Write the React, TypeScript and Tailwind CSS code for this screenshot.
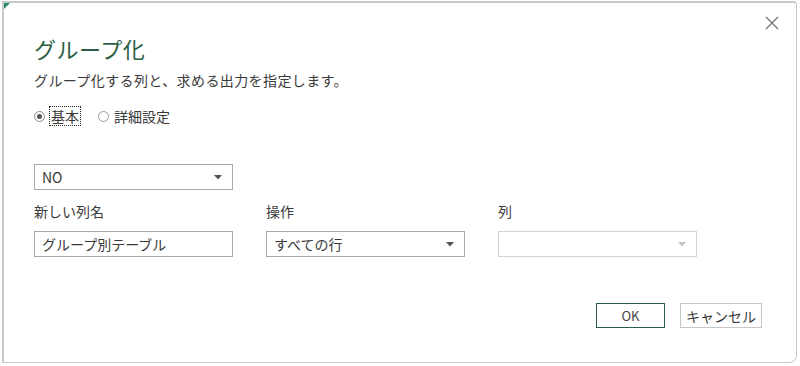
import React from "react";

const font = { fontFamily: '"Noto Sans CJK JP", "Noto Sans", sans-serif' };

const Caret: React.FC<{ dim?: boolean }> = ({ dim }) => (
  <svg width="8" height="5" viewBox="0 0 8 5" className="shrink-0">
    <path d="M0 0h8L4 4.5z" fill={dim ? "#c4c4c4" : "#555"} />
  </svg>
);

const Select: React.FC<{ value?: string; disabled?: boolean }> = ({ value, disabled }) => (
  <div
    className={`w-[199px] h-[26px] flex items-center justify-between pl-[7px] pr-[10px] border bg-white ${
      disabled ? "border-[#d4d4d4]" : "border-[#a9a9a9]"
    }`}
  >
    <span className="text-[14px] text-[#3a3a3a] leading-none">{value}</span>
    <Caret dim={disabled} />
  </div>
);

export default function App() {
  return (
    <div className="w-[800px] h-[366px] bg-white overflow-hidden" style={font}>
      <div className="relative ml-[2px] mt-[1px] w-[795px] h-[362px] border-t-2 border-l-2 border-r border-b border-[#c9c9c9] rounded-tr-[4px] rounded-br-[8px] bg-white">
        <div className="absolute left-0 top-0 w-0 h-0 border-t-[6px] border-r-[6px] border-t-[#2f8a6c] border-r-transparent" />
        <button className="absolute right-[14px] top-[10px] w-[20px] h-[20px] flex items-center justify-center">
          <svg width="14" height="14" viewBox="0 0 14 14">
            <path d="M1 1l12 12M13 1L1 13" stroke="#6e6e6e" strokeWidth="1.1" />
          </svg>
        </button>

        <div className="pl-[30px]">
          <h1 className="pt-[31px] text-[22px] leading-[28px] text-[#2c5e45] font-normal tracking-[0.5px]">
            グループ化
          </h1>
          <p className="mt-[8px] text-[14px] leading-[20px] text-[#3a3a3a] tracking-[0.4px]">
            グループ化する列と、求める出力を指定します。
          </p>

          <div className="mt-[15px] flex items-center text-[14px] text-[#3a3a3a] h-[22px]">
            <span className="w-[11px] h-[11px] rounded-full border border-[#8a8a8a] flex items-center justify-center">
              <span className="w-[5px] h-[5px] rounded-full bg-[#555]" />
            </span>
            <span className="ml-[4px] px-[1px] border border-dotted border-[#222] leading-[18px]">基本</span>
            <span className="ml-[17px] w-[11px] h-[11px] rounded-full border border-[#9a9a9a]" />
            <span className="ml-[5px] leading-[18px]">詳細設定</span>
          </div>

          <div className="mt-[37px]">
            <Select value="NO" />
          </div>

          <div className="mt-[11px] flex gap-[33px]">
            <div className="flex flex-col">
              <span className="text-[14px] leading-[20px] text-[#3a3a3a]">新しい列名</span>
              <div className="mt-[10px] w-[199px] h-[26px] flex items-center pl-[7px] border border-[#a9a9a9] text-[14px] text-[#3a3a3a]">
                グループ別テーブル
              </div>
            </div>
            <div className="flex flex-col">
              <span className="text-[14px] leading-[20px] text-[#3a3a3a]">操作</span>
              <div className="mt-[10px]">
                <Select value="すべての行" />
              </div>
            </div>
            <div className="flex flex-col">
              <span className="text-[14px] leading-[20px] text-[#3a3a3a]">列</span>
              <div className="mt-[10px]">
                <Select disabled />
              </div>
            </div>
          </div>

          <div className="mt-[46px] flex justify-end gap-[15px] pr-[34px]">
            <button className="w-[69px] h-[25px] border border-[#2c5e45] text-[13px] text-[#444] leading-none">
              OK
            </button>
            <button className="w-[82px] h-[25px] border border-[#c6c6c6] text-[14px] text-[#3a3a3a] leading-none">
              キャンセル
            </button>
          </div>
        </div>
      </div>
    </div>
  );
}
